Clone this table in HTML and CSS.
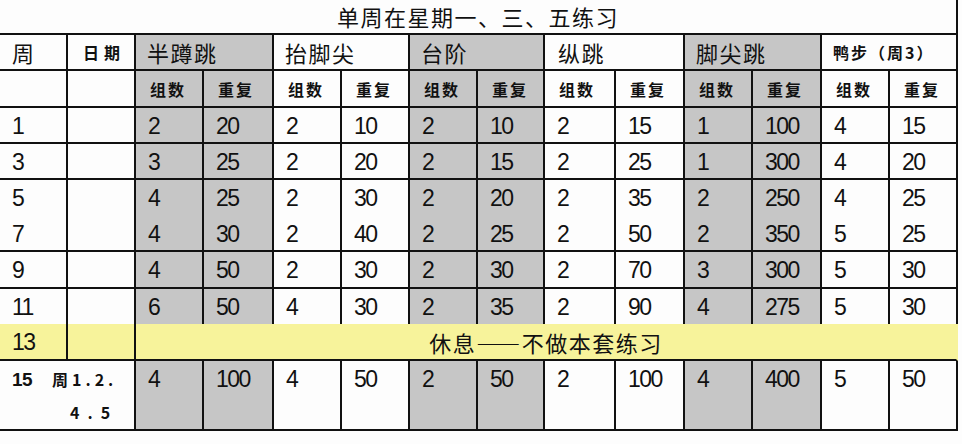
FILE: index.html
```html
<!DOCTYPE html>
<html lang="zh-CN">
<head>
<meta charset="utf-8">
<title>单周在星期一、三、五练习</title>
<link rel="stylesheet" href="styles.css">
</head>
<body>
<div class="sheet">
  <div class="cell title">单周在星期一、三、五练习</div>

  <div class="cell hd first">周</div>
  <div class="cell hd-s date">日期</div>
  <div class="cell hd span2 g">半蹲跳</div>
  <div class="cell hd span2">抬脚尖</div>
  <div class="cell hd span2 g">台阶</div>
  <div class="cell hd span2 jump">纵跳</div>
  <div class="cell hd span2 g">脚尖跳</div>
  <div class="cell hd-s span2 duck">鸭步（周3）</div>

  <div class="cell first"></div>
  <div class="cell"></div>
  <div class="cell sub g">组数</div><div class="cell sub g">重复</div>
  <div class="cell sub">组数</div><div class="cell sub">重复</div>
  <div class="cell sub g">组数</div><div class="cell sub g">重复</div>
  <div class="cell sub">组数</div><div class="cell sub">重复</div>
  <div class="cell sub g">组数</div><div class="cell sub g">重复</div>
  <div class="cell sub">组数</div><div class="cell sub">重复</div>

  <div class="cell num first">1</div><div class="cell"></div>
  <div class="cell num g">2</div><div class="cell num g">20</div>
  <div class="cell num">2</div><div class="cell num">10</div>
  <div class="cell num g">2</div><div class="cell num g">10</div>
  <div class="cell num">2</div><div class="cell num">15</div>
  <div class="cell num g">1</div><div class="cell num g">100</div>
  <div class="cell num">4</div><div class="cell num">15</div>

  <div class="cell num first">3</div><div class="cell"></div>
  <div class="cell num g">3</div><div class="cell num g">25</div>
  <div class="cell num">2</div><div class="cell num">20</div>
  <div class="cell num g">2</div><div class="cell num g">15</div>
  <div class="cell num">2</div><div class="cell num">25</div>
  <div class="cell num g">1</div><div class="cell num g">300</div>
  <div class="cell num">4</div><div class="cell num">20</div>

  <div class="cell num first">5<br>7</div><div class="cell"></div>
  <div class="cell num g">4<br>4</div><div class="cell num g">25<br>30</div>
  <div class="cell num">2<br>2</div><div class="cell num">30<br>40</div>
  <div class="cell num g">2<br>2</div><div class="cell num g">20<br>25</div>
  <div class="cell num">2<br>2</div><div class="cell num">35<br>50</div>
  <div class="cell num g">2<br>2</div><div class="cell num g">250<br>350</div>
  <div class="cell num">4<br>5</div><div class="cell num">25<br>25</div>

  <div class="cell num first">9</div><div class="cell"></div>
  <div class="cell num g">4</div><div class="cell num g">50</div>
  <div class="cell num">2</div><div class="cell num">30</div>
  <div class="cell num g">2</div><div class="cell num g">30</div>
  <div class="cell num">2</div><div class="cell num">70</div>
  <div class="cell num g">3</div><div class="cell num g">300</div>
  <div class="cell num">5</div><div class="cell num">30</div>

  <div class="cell num first open">11</div><div class="cell open"></div>
  <div class="cell num g open">6</div><div class="cell num g open">50</div>
  <div class="cell num open">4</div><div class="cell num open">30</div>
  <div class="cell num g open">2</div><div class="cell num g open">35</div>
  <div class="cell num open">2</div><div class="cell num open">90</div>
  <div class="cell num g open">4</div><div class="cell num g open">275</div>
  <div class="cell num open">5</div><div class="cell num open">30</div>

  <div class="cell num first y">13</div><div class="cell y"></div>
  <div class="cell y rest">休息——不做本套练习</div>

  <div class="cell wk first span2"><span class="wk-n">15</span><span class="wk-d">周1.2.<br><span class="wk-d2">4.5</span></span></div>
  <div class="cell num g">4</div><div class="cell num g">100</div>
  <div class="cell num">4</div><div class="cell num">50</div>
  <div class="cell num g">2</div><div class="cell num g">50</div>
  <div class="cell num">2</div><div class="cell num">100</div>
  <div class="cell num g">4</div><div class="cell num g">400</div>
  <div class="cell num">5</div><div class="cell num">50</div>
</div>
</body>
</html>
```

FILE: styles.css
```css
html, body {
  margin: 0;
  padding: 0;
  background: #fdfdfd;
  overflow: hidden;
}

.sheet {
  display: grid;
  grid-template-columns: 68px 68px 68px 70px 68px 68px 68px 67px 71px 69px 68px 69px 68px 68px;
  grid-template-rows: 35px 36px 37px 36px 36px 72px 37px 35px 37px 70px;
  width: 958px;
  font-family: "Noto Sans CJK SC", "Noto Sans", sans-serif;
  color: #111;
}

.cell {
  box-sizing: border-box;
  border-right: 2px solid #111;
  border-bottom: 2px solid #111;
  background: #fdfdfd;
  line-height: 34px;
  padding-left: 12px;
  white-space: nowrap;
  overflow: hidden;
}

.g { background: #c6c6c6; }

.title {
  grid-column: 1 / -1;
  text-align: center;
  font-size: 22px;
  letter-spacing: 1.5px;
  line-height: 33px;
  padding-left: 0;
}

.span2 { grid-column: span 2; }

.hd {
  font-size: 22px;
  letter-spacing: 1.5px;
  padding-left: 11px;
}
.hd.first { padding-left: 12px; }
.hd.jump { padding-left: 13px; }

.hd-s {
  font-size: 16px;
  font-weight: 700;
  letter-spacing: 2px;
}
.date { padding-left: 15px; letter-spacing: 5px; }
.duck { padding-left: 11px; }

.sub {
  font-size: 16px;
  font-weight: 700;
  letter-spacing: 2px;
  padding-left: 14px;
  line-height: 36px;
}

.num {
  font-family: "Liberation Sans", sans-serif;
  font-size: 23px;
  letter-spacing: -1.5px;
  line-height: 36px;
}

.open { border-bottom: none; }

.y { background: #f7f39b; }

.rest {
  grid-column: span 12;
  text-align: center;
  font-size: 22px;
  letter-spacing: 1.5px;
  line-height: 36px;
  padding-left: 0;
  border-right-color: transparent;
}

.wk {
  display: flex;
  align-items: flex-start;
  font-size: 16px;
  line-height: 33px;
  padding-top: 2px;
}
.wk-n {
  font-family: "Liberation Sans", sans-serif;
  font-size: 19px;
  font-weight: 700;
  letter-spacing: -0.5px;
  width: 40px;
}
.wk-d {
  font-weight: 700;
  letter-spacing: 4px;
}
.wk-d2 { padding-left: 18px; letter-spacing: 8px; }
```
